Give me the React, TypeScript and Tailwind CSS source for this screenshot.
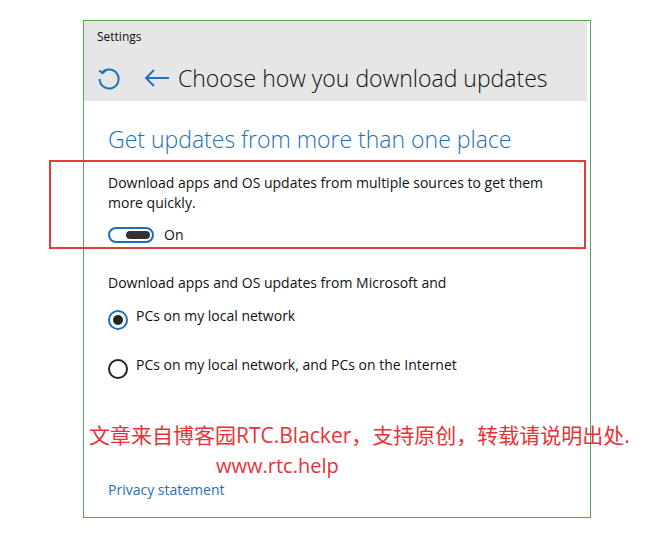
import { useState } from "react";

const font = { fontFamily: '"Open Sans", "Noto Sans CJK SC", sans-serif' };

const RefreshIcon = () => (
  <svg width="26" height="26" viewBox="0 0 26 26" fill="none" stroke="#1e73be" strokeWidth="2">
    <path d="M6.2 7.5 A9.5 9.5 0 1 1 3.6 14" />
    <path d="M3.2 5.5 L6.4 8.2 L9.6 5.6" />
  </svg>
);

const BackIcon = () => (
  <svg width="26" height="20" viewBox="0 0 26 20" fill="none" stroke="#1e73be" strokeWidth="2">
    <path d="M2 10 H25" />
    <path d="M10 2 L2 10 L10 18" />
  </svg>
);

const Radio = ({ checked }: { checked: boolean }) => (
  <div
    className={`w-[20px] h-[20px] rounded-full border-2 flex items-center justify-center ${
      checked ? "border-[#1e6fb8]" : "border-[#222]"
    }`}
  >
    {checked && <div className="w-[10px] h-[10px] rounded-full bg-[#222]" />}
  </div>
);

export default function App() {
  const [on, setOn] = useState(true);
  const [choice, setChoice] = useState(0);

  return (
    <div className="relative w-[659px] h-[534px] bg-white" style={font}>
      <div className="absolute left-[83px] top-[20px] w-[508px] h-[498px] border border-[#5aa35a] flex flex-col">
        {/* Header */}
        <div className="bg-[#e6e6e6] h-[80px] mr-[3px] flex flex-col">
          <div className="text-[12px] text-[#111] pl-[13px] pt-[8px] leading-[16px]">Settings</div>
          <div className="flex items-center pl-[12px] pt-[19px]">
            <RefreshIcon />
            <div className="ml-[22px]">
              <BackIcon />
            </div>
            <span className="ml-[8px] text-[23px] leading-[28px] text-[#111] font-light">
              Choose how you download updates
            </span>
          </div>
        </div>

        {/* Body */}
        <div className="pl-[24px] flex flex-col">
          <h2 className="text-[23px] leading-[28px] text-[#1e6fb8] mt-[24px] font-light">
            Get updates from more than one place
          </h2>
          <p className="text-[14px] leading-[20px] text-[#111] mt-[20px] w-[460px]">
            Download apps and OS updates from multiple sources to get them more quickly.
          </p>
          <button
            onClick={() => setOn(!on)}
            className="flex items-center gap-[10px] mt-[11px] w-fit"
          >
            <div className="w-[46px] h-[16px] rounded-full border-2 border-[#1e6fb8] flex items-center justify-end pr-[2px]">
              <div className="w-[24px] h-[8px] rounded-full bg-[#333]" />
            </div>
            <span className="text-[14px] text-[#111]">{on ? "On" : "Off"}</span>
          </button>

          <p className="text-[14px] leading-[20px] text-[#111] mt-[28px]">
            Download apps and OS updates from Microsoft and
          </p>
          <button onClick={() => setChoice(0)} className="flex items-start gap-[8px] mt-[13px] text-left">
            <div className="mt-[4px]">
              <Radio checked={choice === 0} />
            </div>
            <span className="text-[14px] leading-[20px] text-[#111]">PCs on my local network</span>
          </button>
          <button onClick={() => setChoice(1)} className="flex items-start gap-[8px] mt-[25px] text-left">
            <div className="mt-[4px]">
              <Radio checked={choice === 1} />
            </div>
            <span className="text-[14px] leading-[20px] text-[#111]">
              PCs on my local network, and PCs on the Internet
            </span>
          </button>

          <a className="text-[14px] leading-[20px] text-[#1e6fb8] mt-[101px] w-fit cursor-pointer">
            Privacy statement
          </a>
        </div>
      </div>

      {/* Annotation box */}
      <div className="absolute left-[49px] top-[160px] w-[537px] h-[89px] border-2 border-[#e53a3a]" />

      {/* Watermark */}
      <div className="absolute left-[89px] top-[421px] text-[21px] leading-[28px] text-[#ea3236] whitespace-nowrap">
        文章来自博客园RTC.Blacker，支持原创，转载请说明出处.
      </div>
      <div className="absolute left-[216px] top-[452px] text-[20px] leading-[28px] text-[#ea3236]">
        www.rtc.help
      </div>
    </div>
  );
}
